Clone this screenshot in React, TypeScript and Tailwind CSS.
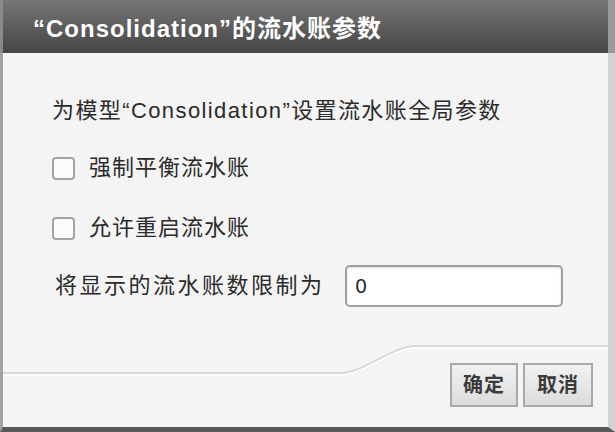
import React from "react";

function Checkbox() {
  return (
    <span className="block w-[23px] h-[23px] rounded-[4px] border-2 border-[#a3a3a3] bg-[#fbfbfb] shrink-0" />
  );
}

export default function App() {
  return (
    <div className="w-[615px] h-[432px] flex flex-col overflow-hidden font-['Liberation_Sans','Noto_Sans_CJK_SC',sans-serif]">
      <div className="h-[53px] shrink-0 flex items-center pl-[30px] pt-[5px] bg-gradient-to-b from-[#767676] to-[#464646] border-l-[3px] border-l-[#8a8a8a] border-r-[7px] border-r-[#9a9a9a]">
        <span className="text-white font-bold text-[24px] tracking-[1px] leading-none">
          “Consolidation”的流水账参数
        </span>
      </div>
      <div className="flex-1 flex flex-col bg-[#f4f4f4] border-l-[3px] border-l-[#a2a2a2] border-r-[7px] border-r-[#d2d2d2] border-b-[5px] border-b-[#585858] text-[#2b2b2b]">
        <div className="flex flex-col pl-[49px] pt-[45px]">
          <div className="h-[26px] flex items-center text-[22px] tracking-[1.4px] leading-none">
            为模型“Consolidation”设置流水账全局参数
          </div>
          <div className="mt-[31px] h-[26px] flex items-center">
            <Checkbox />
            <span className="ml-[14px] text-[22px] tracking-[1px] leading-none">强制平衡流水账</span>
          </div>
          <div className="mt-[34px] h-[26px] flex items-center">
            <Checkbox />
            <span className="ml-[14px] text-[22px] tracking-[1px] leading-none">允许重启流水账</span>
          </div>
          <div className="mt-[24px] flex items-center">
            <span className="pl-[3px] text-[22px] tracking-[2.5px] leading-none">将显示的流水账数限制为</span>
            <div className="ml-[20px] w-[218px] h-[42px] rounded-[5px] border-2 border-[#a0a0a0] bg-white shadow-[inset_0_1px_2px_rgba(0,0,0,0.15)] flex items-center pl-[9px] text-[20px] text-[#222]">
              0
            </div>
          </div>
        </div>
        <div className="relative mt-auto h-[83px] flex justify-end items-start pt-[19px] pr-[15px] gap-[5px]">
          <svg className="absolute left-0 top-0" width="605" height="34" viewBox="0 0 605 34">
            <path d="M0 29 L337 29 C360 29 385 5 410 2 L605 2" fill="none" stroke="#d8d8d8" strokeWidth="2" />
            <path d="M0 31 L337 31 C360 31 385 7 410 4 L605 4" fill="none" stroke="#fdfdfd" strokeWidth="1.5" />
          </svg>
          <button className="relative w-[68px] h-[44px] border-2 border-[#a9a9a9] bg-gradient-to-b from-[#f2f2f2] to-[#dcdcdc] text-[20px] font-bold text-[#3a3a3a] flex items-center justify-center tracking-[1px]">
            确定
          </button>
          <button className="relative w-[70px] h-[44px] border-2 border-[#a9a9a9] bg-gradient-to-b from-[#f2f2f2] to-[#dcdcdc] text-[20px] font-bold text-[#3a3a3a] flex items-center justify-center tracking-[1px]">
            取消
          </button>
        </div>
      </div>
    </div>
  );
}
